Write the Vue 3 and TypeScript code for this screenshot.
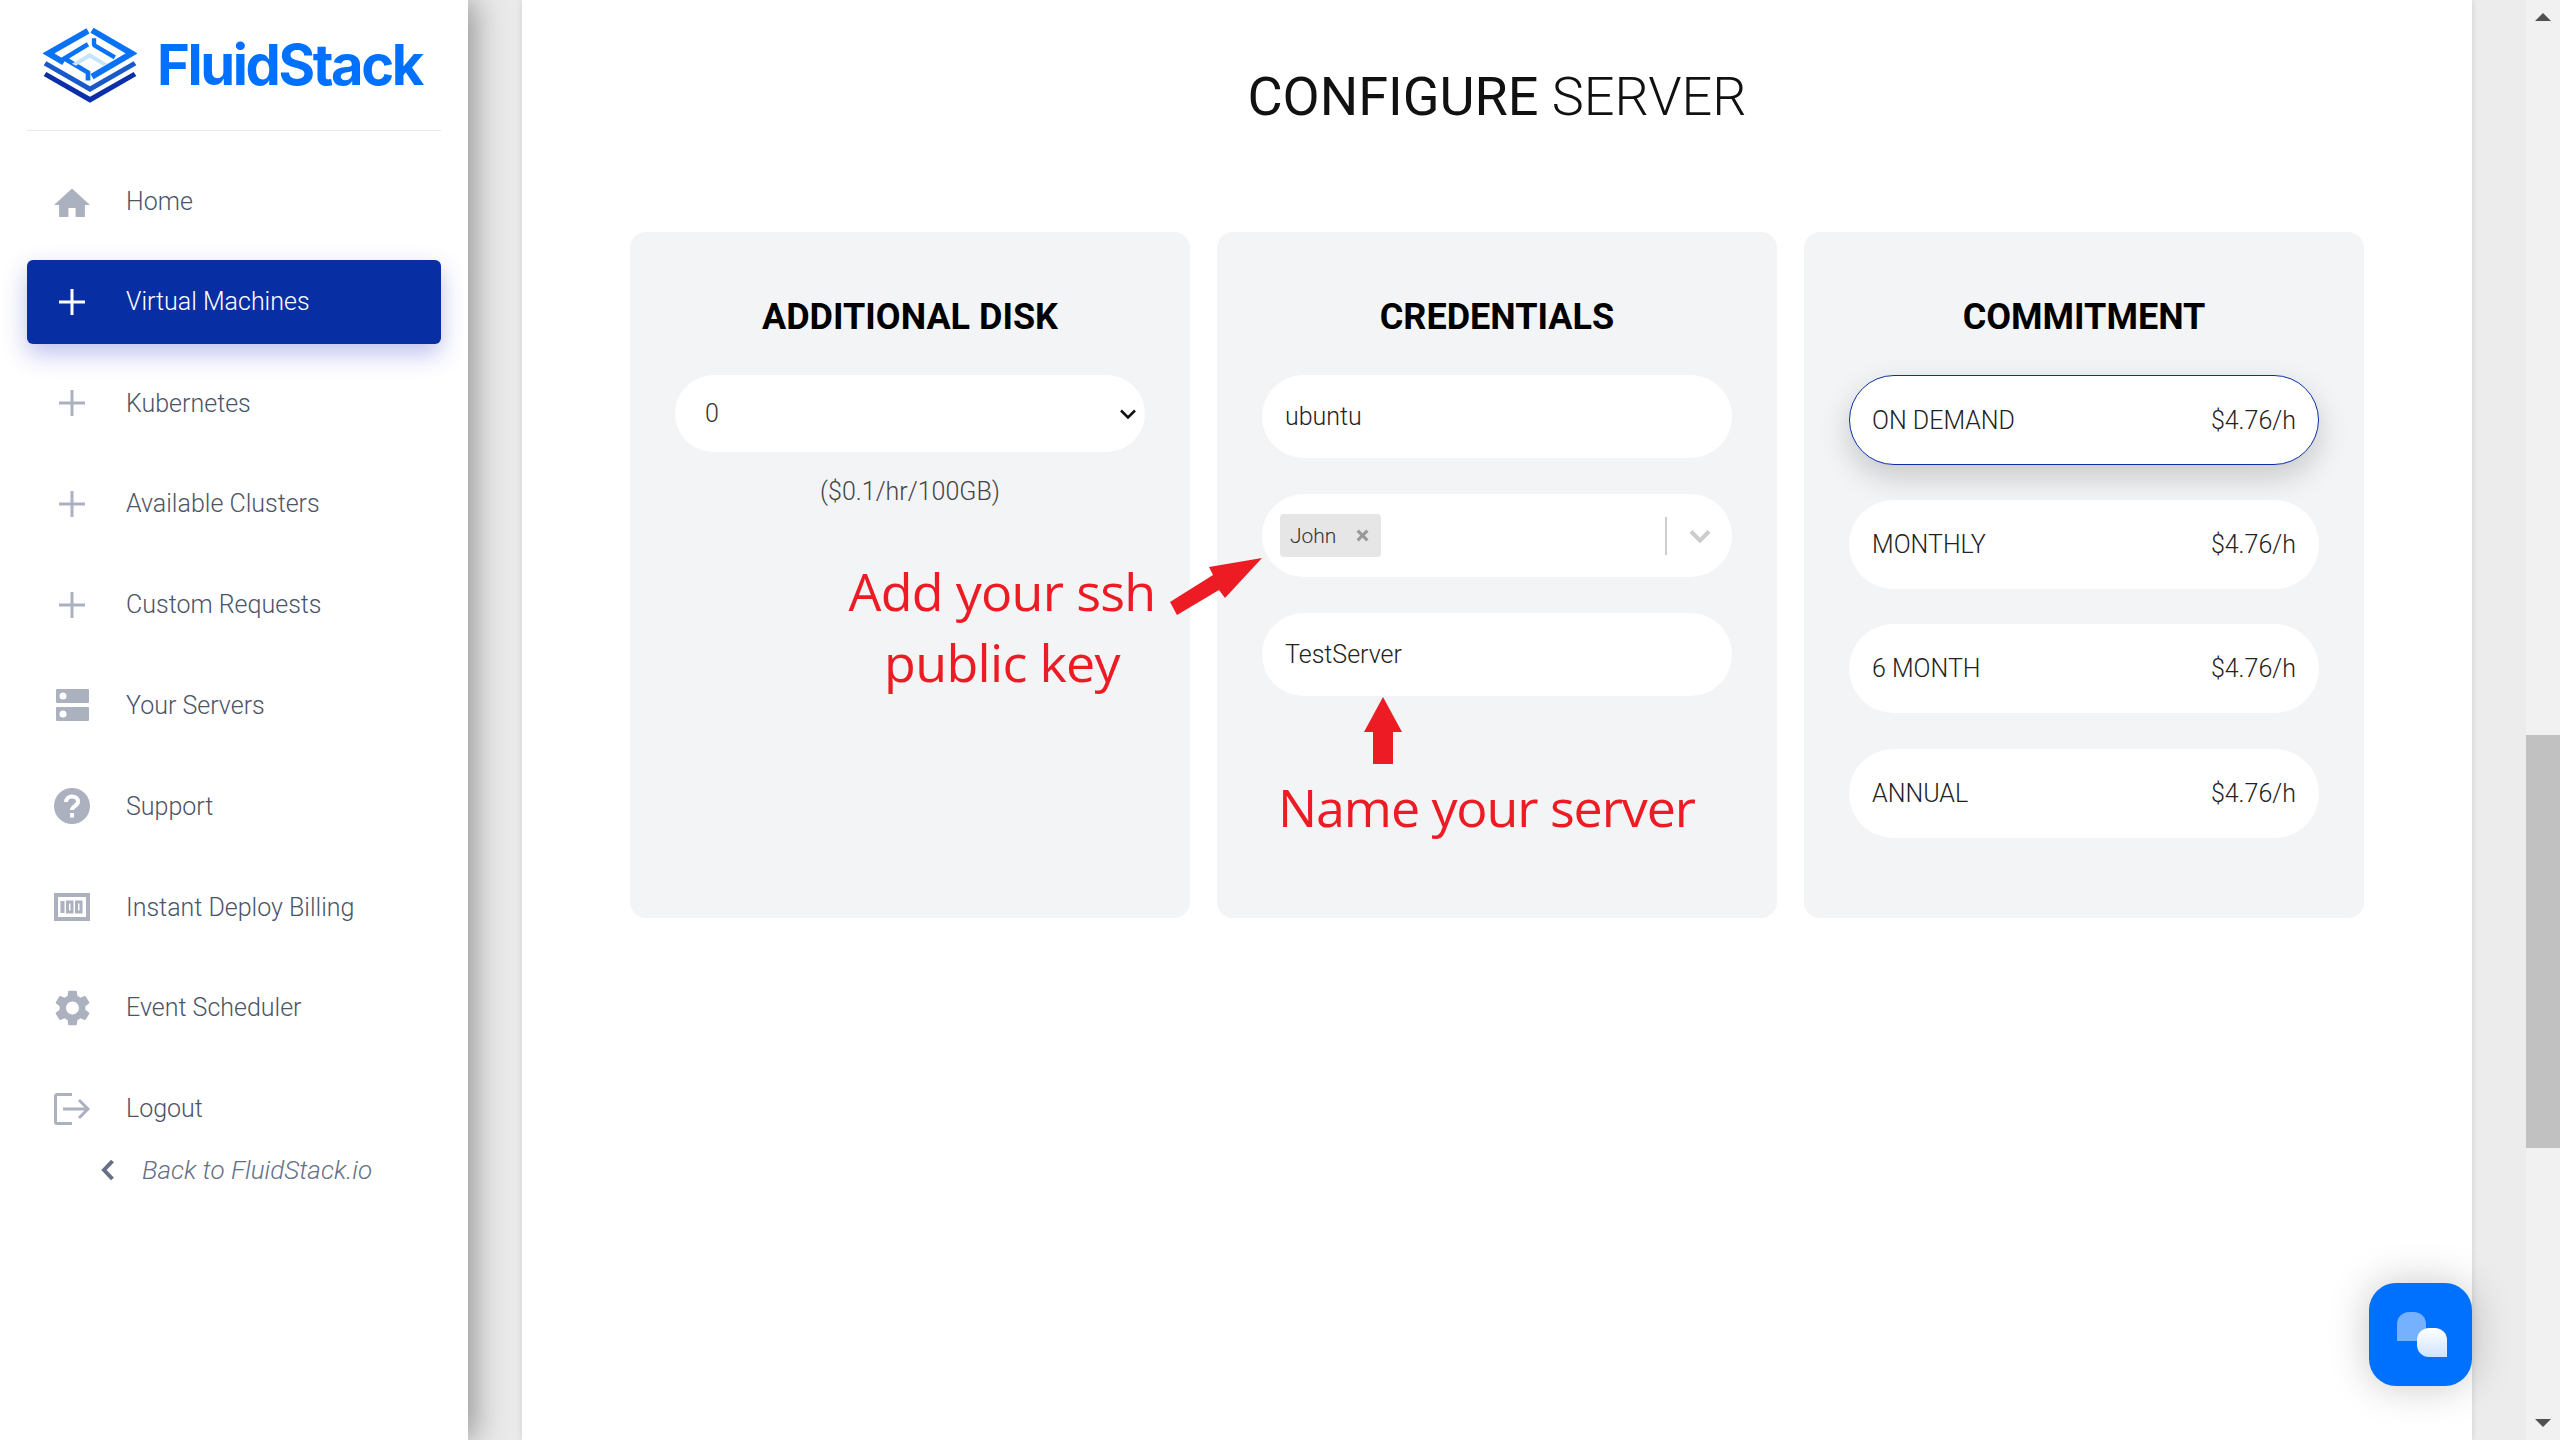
<template>
  <div class="page">
    <aside class="sidebar">
      <div class="brand">
        <svg class="logo" viewBox="70 57 280 225" fill="none">
          <polyline points="204,68 86,135 132,162" stroke="#0a72f5" stroke-width="18" />
          <polyline points="204,108 134,150 204,192 204,216" stroke="#0a72f5" stroke-width="14" fill="none" />
          <polyline points="216,66 334,135 216,204" stroke="#0a72f5" stroke-width="18" />
          <polyline points="222,90 222,110 284,147" stroke="#0a72f5" stroke-width="13" stroke-linejoin="bevel" />
          <polygon points="156,166 209,134 262,166 250,172 209,148 168,172" fill="#c6e4fa" />
          <polygon points="80,158 210,233 340,158 348,170 210,250 72,170" fill="#1a5ac8" />
          <polygon points="80,190 210,264 340,190 348,202 210,282 72,202" fill="#0a2fa8" />
        </svg>
        <span class="brand-name">FluidStack</span>
      </div>
      <nav class="nav">
        <a v-for="item in navItems" :key="item.label" class="nav-item" :class="{ active: item.active }">
          <span class="nav-icon">
            <svg v-if="item.icon === 'home'" viewBox="0 0 24 24" width="36" height="36"><path d="M12 3 0 14h3.4v8h6.2v-6h4.800v6h6.200v-8H24z" fill="currentColor" /></svg>
            <svg v-else-if="item.icon === 'plus'" viewBox="0 0 26 26" width="26" height="26"><path d="M11.5 0h3v11.5H26v3H14.500V26h-3V14.500H0v-3h11.500z" fill="currentColor" /></svg>
            <svg v-else-if="item.icon === 'server'" viewBox="0 0 33 32" width="33" height="32">
              <path fill-rule="evenodd" d="M1 0h31a1 1 0 0 1 1 1v12a1 1 0 0 1-1 1H1a1 1 0 0 1-1-1V1a1 1 0 0 1 1-1zm6 3.500a3.500 3.500 0 1 0 0 7 3.500 3.500 0 0 0 0-7zM1 18h31a1 1 0 0 1 1 1v12a1 1 0 0 1-1 1H1a1 1 0 0 1-1-1V19a1 1 0 0 1 1-1zm6 3.500a3.500 3.500 0 1 0 0 7 3.500 3.500 0 0 0 0-7z" fill="currentColor" />
            </svg>
            <svg v-else-if="item.icon === 'help'" viewBox="0 0 36 36" width="36" height="36">
              <circle cx="18" cy="18" r="18" fill="currentColor" />
              <path d="M12 14c0-3.500 2.700-5.500 6-5.500s6 2 6 5c0 4.500-6 4.500-6 8.500" fill="none" stroke="#fff" stroke-width="4" />
              <rect x="16" y="25" width="4" height="4.500" fill="#fff" />
            </svg>
            <svg v-else-if="item.icon === 'billing'" viewBox="0 0 36 28" width="36" height="28" fill="none" stroke="currentColor">
              <rect x="2" y="2" width="32" height="24" stroke-width="4" />
              <path d="M8.500 8v12" stroke-width="4" />
              <rect x="13.500" y="9" width="4.500" height="10" stroke-width="3" />
              <rect x="22.500" y="9" width="4.500" height="10" stroke-width="3" />
            </svg>
            <svg v-else-if="item.icon === 'cog'" viewBox="2.400 2 19.200 20" width="35" height="36"><path fill="currentColor" d="M19.140 12.940c.04-.3.060-.61.060-.94 0-.32-.02-.64-.07-.94l2.030-1.580c.18-.14.230-.41.120-.61l-1.920-3.320c-.12-.22-.37-.29-.59-.22l-2.390.96c-.5-.38-1.030-.7-1.620-.94l-.36-2.540c-.04-.24-.24-.41-.48-.41h-3.840c-.24 0-.43.17-.47.41l-.36 2.540c-.59.24-1.130.57-1.620.94l-2.390-.96c-.22-.08-.47 0-.59.22L2.740 8.870c-.12.21-.08.47.12.61l2.030 1.580c-.05.3-.09.63-.09.94s.02.64.07.94l-2.030 1.580c-.18.14-.23.41-.12.61l1.920 3.320c.12.22.37.29.59.22l2.390-.96c.5.38 1.030.7 1.620.94l.36 2.540c.05.24.24.41.48.41h3.840c.24 0 .44-.17.47-.41l.36-2.540c.59-.24 1.130-.56 1.620-.94l2.390.96c.22.08.47 0 .59-.22l1.920-3.320c.12-.22.070-.47-.12-.61l-2.010-1.580zM12 15.600c-1.980 0-3.600-1.620-3.600-3.600s1.620-3.600 3.600-3.600 3.600 1.620 3.600 3.600-1.620 3.600-3.600 3.600z" /></svg>
            <svg v-else viewBox="0 0 36 32" width="36" height="32" fill="none" stroke="currentColor" stroke-width="3">
              <path d="M18 1.500H3a1.500 1.500 0 0 0-1.500 1.500v26A1.500 1.500 0 0 0 3 30.500h15" />
              <path d="M9 16h25M25 7l9 9-9 9" />
            </svg>
          </span>
          <span>{{ item.label }}</span>
        </a>
      </nav>
      <a class="back-link">
        <svg viewBox="0 0 14 22" width="14" height="22"><path d="M11.500 2 3 11l8.500 9" fill="none" stroke="#667085" stroke-width="4" /></svg>
        <span>Back to FluidStack.io</span>
      </a>
    </aside>

    <div class="gutter"></div>

    <main class="main">
      <h1 class="title"><strong>CONFIGURE</strong> SERVER</h1>
      <section class="cards">
        <div class="card">
          <h2>ADDITIONAL DISK</h2>
          <div class="field disk-select">
            <span>0</span>
            <svg viewBox="0 0 18 12" width="18" height="12"><path d="M2 2.500 9 9.500l7-7" fill="none" stroke="#111" stroke-width="2.500" /></svg>
          </div>
          <p class="hint">($0.1/hr/100GB)</p>
          <p class="note ssh-note">Add your ssh<br />public key</p>
        </div>

        <div class="card credentials">
          <h2>CREDENTIALS</h2>
          <div class="field">ubuntu</div>
          <div class="field key-select">
            <span class="tag">John
              <svg viewBox="0 0 12 12" width="13" height="13"><path d="M1.500 1.500l9 9m0-9-9 9" stroke="#999" stroke-width="2.800" /></svg>
            </span>
            <span class="sep"></span>
            <svg viewBox="0 0 22 14" width="22" height="14"><path d="M2 2.500l9 9 9-9" fill="none" stroke="#ccc" stroke-width="4" /></svg>
          </div>
          <div class="field">TestServer</div>
          <svg class="up-arrow" viewBox="0 0 38 67" width="38" height="67"><polygon points="19,0 38,35 29,35 29,67 9,67 9,35 0,35" fill="#ed1c24" /></svg>
          <p class="note name-note">Name your server</p>
          <svg class="side-arrow" viewBox="0 0 100 63" width="100" height="63"><polygon points="97,3 44,12 48,20 5,47 12,60 54,35 60,43" fill="#ed1c24" /></svg>
        </div>

        <div class="card">
          <h2>COMMITMENT</h2>
          <div v-for="plan in plans" :key="plan.name" class="plan" :class="{ selected: plan.selected }">
            <span>{{ plan.name }}</span>
            <span>{{ plan.price }}</span>
          </div>
        </div>
      </section>

      <button class="chat-btn">
        <svg viewBox="0 0 50 46" width="50" height="46">
          <defs>
            <linearGradient id="front" x1="0" y1="0" x2="0" y2="1"><stop offset="0" stop-color="#fff" /><stop offset="1" stop-color="#cfe3ff" /></linearGradient>
          </defs>
          <path d="M12 0h5a12 12 0 0 1 12 12v17H0V12A12 12 0 0 1 12 0z" fill="#fff" opacity=".46" />
          <path d="M32 16h6a12 12 0 0 1 12 12v17H32a12 12 0 0 1-12-12v-5a12 12 0 0 1 12-12z" fill="url(#front)" />
        </svg>
      </button>
    </main>

    <div class="gutter right"></div>

    <div class="scrollbar">
      <span class="arrow up"></span>
      <div class="track"><div class="thumb"></div></div>
      <span class="arrow down"></span>
    </div>
  </div>
</template>

<script setup lang="ts">
const navItems = [
  { label: 'Home', icon: 'home' },
  { label: 'Virtual Machines', icon: 'plus', active: true },
  { label: 'Kubernetes', icon: 'plus' },
  { label: 'Available Clusters', icon: 'plus' },
  { label: 'Custom Requests', icon: 'plus' },
  { label: 'Your Servers', icon: 'server' },
  { label: 'Support', icon: 'help' },
  { label: 'Instant Deploy Billing', icon: 'billing' },
  { label: 'Event Scheduler', icon: 'cog' },
  { label: 'Logout', icon: 'logout' }
]

const plans = [
  { name: 'ON DEMAND', price: '$4.76/h', selected: true },
  { name: 'MONTHLY', price: '$4.76/h' },
  { name: '6 MONTH', price: '$4.76/h' },
  { name: 'ANNUAL', price: '$4.76/h' }
]
</script>

<style>
html,
body {
  margin: 0;
  overflow: hidden;
}
</style>

<style scoped>
.page {
  display: flex;
  width: 2560px;
  height: 1440px;
  overflow: hidden;
  background: #eaeaea;
  font-family: Roboto, "Liberation Sans", sans-serif;
  font-weight: 300;
  font-size: 25px;
  color: #222;
}

/* sidebar */
.sidebar {
  position: relative;
  z-index: 1;
  flex: 0 0 468px;
  background: #fff;
  box-shadow: 6px 0 30px rgba(0, 0, 0, 0.38);
}

.brand {
  display: flex;
  align-items: center;
  gap: 20px;
  height: 130px;
  margin: 0 27px;
  padding: 0 0 0 16px;
  border-bottom: 1px solid #e8e9ec;
}

.logo {
  width: 94px;
  height: 76px;
  margin-top: 0;
}

.brand-name {
  font-family: Inter, sans-serif;
  font-weight: 700;
  font-size: 56px;
  letter-spacing: -2.4px;
  color: #0070ff;
}

.nav {
  display: grid;
  grid-auto-rows: 83px;
  row-gap: 17.8px;
  margin: 29px 27px 0;
}

.nav-item {
  display: flex;
  align-items: center;
  gap: 36px;
  padding-left: 27px;
  border-radius: 6px;
  color: #4b5468;
}

.nav-item.active {
  margin-top: -1px;
  background: #072fa3;
  color: #fff;
  box-shadow: 0 10px 24px rgba(40, 50, 200, 0.3);
}

.nav-icon {
  display: flex;
  flex: 0 0 36px;
  align-items: center;
  justify-content: center;
  color: #abb1bf;
}

.active .nav-icon {
  color: #fff;
}

.back-link {
  display: flex;
  align-items: center;
  gap: 27px;
  margin-top: -1px;
  padding-left: 101px;
  line-height: 42px;
  font-size: 26px;
  font-style: italic;
  color: #667085;
}

.gutter {
  flex: 0 0 54px;
}

.gutter.right {
  background: #ececec;
}

/* main */
.main {
  position: relative;
  z-index: 0;
  flex: 0 0 1950px;
  box-sizing: border-box;
  padding: 66px 108px 0;
  background: #fff;
  box-shadow: 0 0 6px rgba(0, 0, 0, 0.12);
}

.title {
  margin: 0 0 104px;
  line-height: 62px;
  text-align: center;
  font-size: 54px;
  font-weight: 300;
  color: #111;
}

.title strong {
  font-weight: 400;
}

.cards {
  display: grid;
  grid-template-columns: repeat(3, 560px);
  column-gap: 27px;
}

.card {
  position: relative;
  box-sizing: border-box;
  height: 686px;
  padding: 63px 45px 0;
  background: #f3f4f6;
  border-radius: 16px;
}

.card h2 {
  margin: 0 0 36px;
  line-height: 44px;
  text-align: center;
  font-size: 36px;
  font-weight: 700;
  color: #000;
}

.field {
  display: flex;
  align-items: center;
  box-sizing: border-box;
  height: 83px;
  margin-bottom: 36px;
  padding: 0 23px;
  background: #fff;
  border-radius: 42px;
}

.disk-select {
  justify-content: space-between;
  height: 77px;
  margin-bottom: 22px;
  padding: 0 8px 0 30px;
  color: #333;
}

.hint {
  margin: 0;
  line-height: 36px;
  text-align: center;
  color: #444;
}

.note {
  margin: 0;
  line-height: 71px;
  font-family: "Open Sans", sans-serif;
  font-weight: 400;
  font-size: 52px;
  color: #ed1c24;
}

.ssh-note {
  width: 400px;
  margin: 45px 0 0 127px;
  text-align: center;
  letter-spacing: -0.7px;
}

.key-select {
  padding: 0 21px 0 18px;
}

.tag {
  display: flex;
  align-items: center;
  gap: 20px;
  height: 43px;
  padding: 0 12px 0 10px;
  background: #e6e6e6;
  border-radius: 4px;
  font-size: 21px;
  color: #333;
}

.sep {
  width: 2px;
  height: 38px;
  margin: 0 22px 0 auto;
  background: #ccc;
}

.up-arrow {
  display: block;
  margin: -35px 0 0 102px;
}

.name-note {
  margin: 7px 0 0 16px;
  white-space: nowrap;
  letter-spacing: -1.1px;
}

.side-arrow {
  position: absolute;
  left: -52px;
  top: 323px;
}

.plan {
  display: flex;
  align-items: center;
  justify-content: space-between;
  box-sizing: border-box;
  height: 89px;
  margin-bottom: 35.6px;
  padding: 0 23px;
  background: #fff;
  border-radius: 45px;
}

.plan.selected {
  height: 90px;
  margin-bottom: 34.6px;
  border: 1px solid #0a2fa8;
  padding: 0 22px;
  box-shadow: 0 12px 30px rgba(0, 0, 0, 0.18);
}

.chat-btn {
  position: absolute;
  right: 0;
  bottom: 54px;
  display: flex;
  align-items: center;
  justify-content: center;
  width: 103px;
  height: 103px;
  padding: 0 0 0 2px;
  border: 0;
  border-radius: 27px;
  background: #0070ff;
  box-shadow: 0 0 40px rgba(0, 0, 0, 0.22);
}

/* fake browser scrollbar */
.scrollbar {
  display: flex;
  flex: 0 0 34px;
  flex-direction: column;
  align-items: center;
  background: #f1f1f1;
}

.track {
  flex: 1;
  align-self: stretch;
}

.thumb {
  height: 413px;
  margin-top: 701px;
  background: #c1c1c1;
}

.arrow {
  width: 0;
  height: 0;
  margin: 13px 0;
  border-left: 8px solid transparent;
  border-right: 8px solid transparent;
}

.arrow.up {
  border-bottom: 8px solid #505050;
}

.arrow.down {
  border-top: 8px solid #505050;
}
</style>
